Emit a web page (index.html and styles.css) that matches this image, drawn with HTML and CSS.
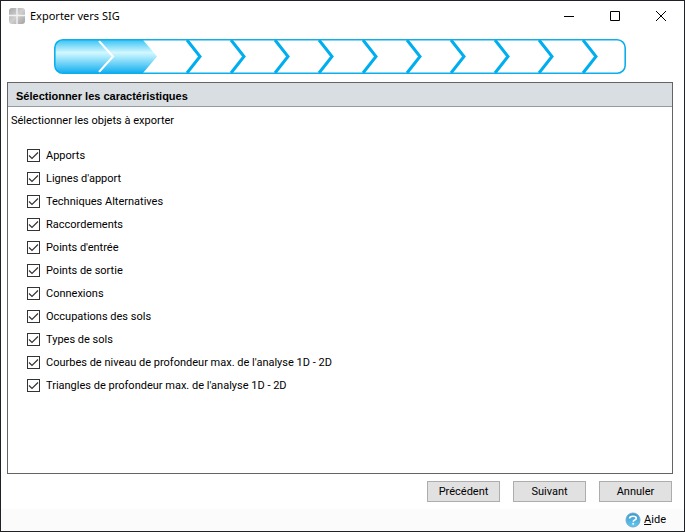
FILE: index.html
```html
<!DOCTYPE html>
<html lang="fr">
<head>
    <meta charset="UTF-8">
    <meta name="viewport" content="width=device-width, initial-scale=1.0">
    <title>Exporter vers SIG</title>
    <link rel="stylesheet" href="styles.css">
</head>
<body>
    <header class="title-bar">
        <svg class="app-icon" viewBox="0 0 16 16" aria-hidden="true">
            <defs>
                <linearGradient id="tile" x1="0" y1="0" x2="1" y2="1">
                    <stop offset="0" stop-color="#a8a8a8"/>
                    <stop offset="0.5" stop-color="#cfcfcf"/>
                    <stop offset="1" stop-color="#a2a2a2"/>
                </linearGradient>
            </defs>
            <rect width="16" height="16" rx="3" fill="url(#tile)"/>
            <path d="M8 0V16M0 7.5H16" stroke="#f2f2f2" stroke-width="1.4"/>
        </svg>
        <h1 class="window-title">Exporter vers SIG</h1>
        <div class="window-controls">
            <button type="button" class="window-btn" aria-label="Réduire">
                <svg viewBox="0 0 10 10"><path d="M0 5.5H10"/></svg>
            </button>
            <button type="button" class="window-btn" aria-label="Agrandir">
                <svg viewBox="0 0 10 10"><path d="M0.5 0.5H9.5V9.5H0.5Z"/></svg>
            </button>
            <button type="button" class="window-btn" aria-label="Fermer">
                <svg viewBox="0 0 10 10"><path d="M0 0L10 10M10 0L0 10"/></svg>
            </button>
        </div>
    </header>

    <div class="progress">
        <svg class="progress-bar" viewBox="0 0 572 35" role="img" aria-label="Étape 2 sur 12">
            <defs>
                <linearGradient id="done" x1="0" y1="0" x2="0" y2="1">
                    <stop offset="0" stop-color="#3cc3f5"/>
                    <stop offset="0.38" stop-color="#d2f8ff"/>
                    <stop offset="0.5" stop-color="#b0ecfd"/>
                    <stop offset="1" stop-color="#14aff0"/>
                </linearGradient>
            </defs>
            <path d="M9 1H89L103 17.5L89 34H9Q1 34 1 26V9Q1 1 9 1Z" fill="url(#done)"/>
            <path d="M45 2L59 17.5L45 33" fill="none" stroke="#fff" stroke-width="2"/>
            <g fill="none" stroke="#00aeef" stroke-width="3">
                <path d="M133 1L146 17.5L133 34"/>
                <path d="M177 1L190 17.5L177 34"/>
                <path d="M221 1L234 17.5L221 34"/>
                <path d="M265 1L278 17.5L265 34"/>
                <path d="M309 1L322 17.5L309 34"/>
                <path d="M353 1L366 17.5L353 34"/>
                <path d="M397 1L410 17.5L397 34"/>
                <path d="M441 1L454 17.5L441 34"/>
                <path d="M485 1L498 17.5L485 34"/>
                <path d="M529 1L542 17.5L529 34"/>
            </g>
            <rect x="0.8" y="0.8" width="570.4" height="33.4" rx="8" fill="none" stroke="#0cafec" stroke-width="1.6"/>
        </svg>
    </div>

    <main class="panel">
        <h2 class="panel-title">Sélectionner les caractéristiques</h2>
        <p class="panel-text">Sélectionner les objets à exporter</p>
        <div class="options">
            <label class="option"><input type="checkbox" checked><span>Apports</span></label>
            <label class="option"><input type="checkbox" checked><span>Lignes d'apport</span></label>
            <label class="option"><input type="checkbox" checked><span>Techniques Alternatives</span></label>
            <label class="option"><input type="checkbox" checked><span>Raccordements</span></label>
            <label class="option"><input type="checkbox" checked><span>Points d'entrée</span></label>
            <label class="option"><input type="checkbox" checked><span>Points de sortie</span></label>
            <label class="option"><input type="checkbox" checked><span>Connexions</span></label>
            <label class="option"><input type="checkbox" checked><span>Occupations des sols</span></label>
            <label class="option"><input type="checkbox" checked><span>Types de sols</span></label>
            <label class="option"><input type="checkbox" checked><span>Courbes de niveau de profondeur max. de l'analyse 1D - 2D</span></label>
            <label class="option"><input type="checkbox" checked><span>Triangles de profondeur max. de l'analyse 1D - 2D</span></label>
        </div>
    </main>

    <div class="actions">
        <button type="button" class="btn">Précédent</button>
        <button type="button" class="btn">Suivant</button>
        <button type="button" class="btn">Annuler</button>
    </div>

    <footer class="status-bar">
        <a href="#" class="help-link">
            <svg class="help-icon" viewBox="0 0 16 16" aria-hidden="true">
                <defs>
                    <linearGradient id="help" x1="0" y1="0" x2="0" y2="1">
                        <stop offset="0" stop-color="#3b97cc"/>
                        <stop offset="1" stop-color="#62c8f2"/>
                    </linearGradient>
                </defs>
                <circle cx="8" cy="8" r="7" fill="url(#help)" stroke="#6fa9cc"/>
                <path d="M4.5 6.5Q4.5 4.2 8 4.2Q11.3 4.2 11.3 6.2Q11.3 7.4 9.8 8Q8.2 8.6 8.2 9.8" fill="none" stroke="#fff" stroke-width="1.6"/>
                <circle cx="8.2" cy="11.8" r="1" fill="#fff"/>
            </svg>
            <span><u>A</u>ide</span>
        </a>
    </footer>
</body>
</html>
```
FILE: styles.css
```css
* {
    margin: 0;
    padding: 0;
    box-sizing: border-box;
}

body {
    font-family: Roboto, "Liberation Sans", sans-serif;
    font-size: 11px;
    line-height: 14px;
    color: #000;
    background-color: #fff;
    min-height: 100vh;
    display: flex;
    flex-direction: column;
    border: 1px solid #202126;
}

.title-bar {
    display: flex;
    align-items: center;
    height: 29px;
    padding-left: 8px;
}

.app-icon {
    width: 16px;
    height: 16px;
    margin-right: 5px;
}

.window-title {
    flex: 1;
    font-family: "Noto Sans", sans-serif;
    font-size: 11px;
    font-weight: normal;
}

.window-controls {
    display: flex;
}

.window-btn {
    display: flex;
    align-items: center;
    justify-content: center;
    width: 46px;
    height: 29px;
    border: none;
    background: none;
}

.window-btn svg {
    width: 10px;
    height: 10px;
    overflow: visible;
    fill: none;
    stroke: #000;
}

.progress {
    padding: 9px 58px 8px 53px;
}

.progress-bar {
    display: block;
    width: 100%;
}

.panel {
    flex: 1;
    margin: 0 11px 0 6px;
    border: 1px solid #646464;
}

.panel-title {
    padding: 6px 8px 3px;
    font-family: "Liberation Sans", Arial, sans-serif;
    font-size: 11px;
    line-height: 14px;
    font-weight: bold;
    background-color: #d9dee2;
    border-bottom: 1px solid #949a9e;
}

.panel-text {
    padding: 7px 3px 6px;
}

.options {
    display: flex;
    flex-direction: column;
    padding: 10px 19px;
}

.option {
    display: flex;
    align-items: center;
    gap: 6px;
    height: 23px;
}

.option span {
    padding-top: 1px;
}

.option input {
    appearance: none;
    width: 13px;
    height: 13px;
    border: 1px solid #333;
    background: #fff url("data:image/svg+xml,%3Csvg xmlns='http://www.w3.org/2000/svg' viewBox='0 0 11 11'%3E%3Cpath d='M1 5.5L4 8.5L10 2.5' fill='none' stroke='%23333' stroke-width='1.2'/%3E%3C/svg%3E");
}

.option input:not(:checked) {
    background-image: none;
}

.actions {
    display: flex;
    justify-content: flex-end;
    gap: 13px;
    padding: 7px 12px;
}

.btn {
    width: 73px;
    height: 21px;
    font: inherit;
    color: #000;
    background-color: #e1e1e1;
    border: 1px solid #adadad;
}

.status-bar {
    display: flex;
    justify-content: flex-end;
    padding: 3px 18px;
    background-color: #fbfbfb;
}

.help-link {
    display: flex;
    align-items: center;
    gap: 3px;
    color: #000;
    text-decoration: none;
}

.help-icon {
    width: 16px;
    height: 16px;
}
```
